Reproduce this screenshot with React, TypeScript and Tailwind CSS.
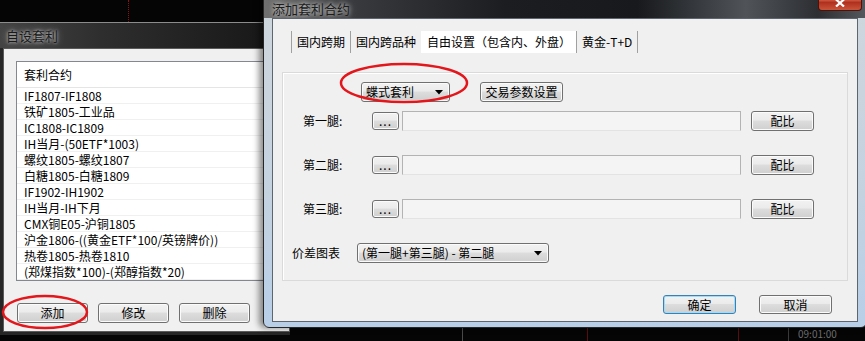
import type { ReactNode } from 'react'

const contracts = [
  'IF1807-IF1808',
  '铁矿1805-工业品',
  'IC1808-IC1809',
  'IH当月-(50ETF*1003)',
  '螺纹1805-螺纹1807',
  '白糖1805-白糖1809',
  'IF1902-IH1902',
  'IH当月-IH下月',
  'CMX铜E05-沪铜1805',
  '沪金1806-((黄金ETF*100/英镑牌价))',
  '热卷1805-热卷1810',
  '(郑煤指数*100)-(郑醇指数*20)',
]

const tabs = ['国内跨期', '国内跨品种', '自由设置（包含内、外盘）', '黄金-T+D']
const legs = ['第一腿:', '第二腿:', '第三腿:']

const btnFace =
  'flex items-center rounded-[3px] border text-[12px] leading-none text-black bg-[linear-gradient(#f2f2f2_0%,#ebebeb_45%,#dddddd_50%,#cfcfcf_100%)]'

function WinButton({ children, className = '', primary = false }: { children: ReactNode; className?: string; primary?: boolean }) {
  return (
    <div
      className={`${btnFace} justify-center ${
        primary
          ? 'border-[#3c7fb1] shadow-[inset_0_0_0_1px_#9fdcf7]'
          : 'border-[#707070] shadow-[inset_0_0_0_1px_#fbfbfb]'
      } ${className}`}
    >
      {children}
    </div>
  )
}

function Arrow() {
  return (
    <svg width="8" height="5" viewBox="0 0 8 5" className="shrink-0">
      <polygon points="0,0 8,0 4,4.5" fill="#000" />
    </svg>
  )
}

function Combo({ label, className = '' }: { label: string; className?: string }) {
  return (
    <div className={`${btnFace} justify-between border-[#707070] shadow-[inset_0_0_0_1px_#fbfbfb] pl-[4px] pr-[6px] ${className}`}>
      <span className="whitespace-nowrap">{label}</span>
      <Arrow />
    </div>
  )
}

export default function App() {
  return (
    <div className="relative w-[865px] h-[341px] overflow-hidden bg-[#050505] font-['Noto_Sans_CJK_SC',sans-serif] text-[12px] text-black">
      {/* chart lines behind the windows */}
      <div className="absolute left-[128px] top-0 h-[22px] border-l border-dotted border-[#8a1414]" />
      <div className="absolute left-[462px] top-[328px] h-[13px] border-l border-[#4a4a4a]" />
      <div className="absolute left-[587px] top-[328px] h-[13px] border-l border-[#5a0e0e]" />
      <div className="absolute left-[738px] top-[328px] h-[13px] border-l border-[#5a0e0e]" />
      <div className="absolute left-[788px] top-[328px] h-[13px] border-l border-[#3a3a3a]" />
      <div className="absolute left-[798px] top-[329px] text-[10px] leading-[10px] text-[#6f6f6f]">09:01:00</div>

      {/* 自设套利 */}
      <div className="absolute left-0 top-[22px] w-[290px] h-[313px] border-t border-[#8c8c8c] bg-[#262626] flex flex-col">
        <div className="h-[25px] flex items-center pl-[6px] bg-[linear-gradient(90deg,#444_0%,#2e2e2e_35%,#151515_100%)]">
          <span className="text-[13px] text-[#1a1a1a] [text-shadow:0_0_3px_#ccc,0_0_7px_#aaa]">自设套利</span>
        </div>
        <div className="ml-[3px] h-[284px] border border-[#5a5a5a] bg-[#f0f0f0] flex flex-col">
          <div className="ml-[12px] mt-[12px] w-[300px] h-[220px] border border-[#828790] bg-white flex flex-col">
            <div className="h-[26px] shrink-0 flex items-center pl-[7px] border-b border-[#e5e5e5] text-[12px]">套利合约</div>
            {contracts.map((c) => (
              <div key={c} className="h-[16px] shrink-0 flex items-center pl-[7px] border-b border-[#f0f0f0] leading-none whitespace-nowrap">
                {c}
              </div>
            ))}
          </div>
          <div className="flex gap-[10px] ml-[13px] mt-[22px]">
            <WinButton className="w-[71px] h-[20px]">添加</WinButton>
            <WinButton className="w-[71px] h-[20px]">修改</WinButton>
            <WinButton className="w-[71px] h-[20px]">删除</WinButton>
          </div>
        </div>
      </div>

      {/* 添加套利合约 */}
      <div className="absolute left-[263px] top-[-8px] w-[604px] h-[336px] rounded-[6px] border border-[#262626] bg-[linear-gradient(#cfd6dd_0%,#c4d2e0_60%,#b8cfe8_100%)] shadow-[-4px_0_6px_rgba(0,0,0,0.45)] flex flex-col overflow-hidden">
        <div className="h-[25px] shrink-0 flex items-start justify-between bg-[linear-gradient(90deg,#707070_0%,#3a3b3e_14%,#1b1d21_40%,#17191c_62%,#505459_80%,#2c2e32_92%,#55585c_100%)]">
          <span className="mt-[9px] ml-[8px] text-[13px] leading-[14px] text-[#1c1c1c] [text-shadow:0_0_4px_#ddd,0_0_8px_#aaa]">添加套利合约</span>
          <div className="mr-[4px] w-[44px] h-[18px] rounded-b-[4px] border border-t-0 border-[#4a130b] bg-[linear-gradient(#e08a78_0%,#c8503a_45%,#b0301e_55%,#c9543a_100%)] flex items-end justify-center pb-[3px]">
            <svg width="10" height="8" viewBox="0 0 10 8">
              <path d="M1 0.5 L9 7.5 M9 0.5 L1 7.5" stroke="#fff" strokeWidth="2.2" />
            </svg>
          </div>
        </div>

        <div className="mx-[8px] h-[304px] shrink-0 border border-[#5d6670] bg-[#f0f0f0] flex flex-col">
          <div className="flex h-[22px] ml-[18px] mt-[12px]">
            {tabs.map((t, i) => (
              <div
                key={t}
                className={`flex items-center px-[5px] whitespace-nowrap border-l ${
                  i === 2 ? 'bg-white border-white' : 'border-[#a0a0a0]'
                } ${i === 3 ? 'border-r' : ''}`}
              >
                {t}
              </div>
            ))}
          </div>

          <div className="ml-[9px] mr-[9px] mt-[19px] h-[209px] border border-[#dadada] shadow-[inset_1px_1px_0_#fff] flex flex-col">
            <div className="flex items-center pl-[78px] pt-[9px]">
              <Combo label="蝶式套利" className="w-[89px] h-[20px]" />
              <WinButton className="ml-[30px] w-[83px] h-[20px]">交易参数设置</WinButton>
            </div>
            <div className="flex flex-col gap-[24px] mt-[9px]">
              {legs.map((l) => (
                <div key={l} className="flex items-center h-[20px] pl-[20px]">
                  <span className="w-[69px]">{l}</span>
                  <WinButton className="w-[27px] h-[18px] text-[9px] text-[#666] tracking-[1px]">...</WinButton>
                  <div className="ml-[3px] w-[339px] h-[20px] border border-[#b3b3b3] border-b-[#e3e3e3] bg-[#f4f4f4]" />
                  <WinButton className="ml-[10px] w-[63px] h-[20px]">配比</WinButton>
                </div>
              ))}
            </div>
            <div className="flex items-center h-[20px] pl-[9px] mt-[24px]">
              <span className="w-[65px]">价差图表</span>
              <Combo label="(第一腿+第三腿) - 第二腿" className="w-[192px] h-[20px]" />
            </div>
          </div>

          <div className="flex justify-end gap-[23px] pr-[25px] mt-[14px]">
            <WinButton primary className="w-[73px] h-[19px]">确定</WinButton>
            <WinButton className="w-[73px] h-[19px]">取消</WinButton>
          </div>
        </div>
      </div>

      {/* red annotation circles */}
      <svg className="absolute inset-0 pointer-events-none" width="865" height="341">
        <ellipse cx="45" cy="312" rx="42" ry="16" fill="none" stroke="#e3161b" strokeWidth="2.5" />
        <ellipse cx="404" cy="83" rx="63" ry="19" fill="none" stroke="#e3161b" strokeWidth="2.5" />
      </svg>
    </div>
  )
}
